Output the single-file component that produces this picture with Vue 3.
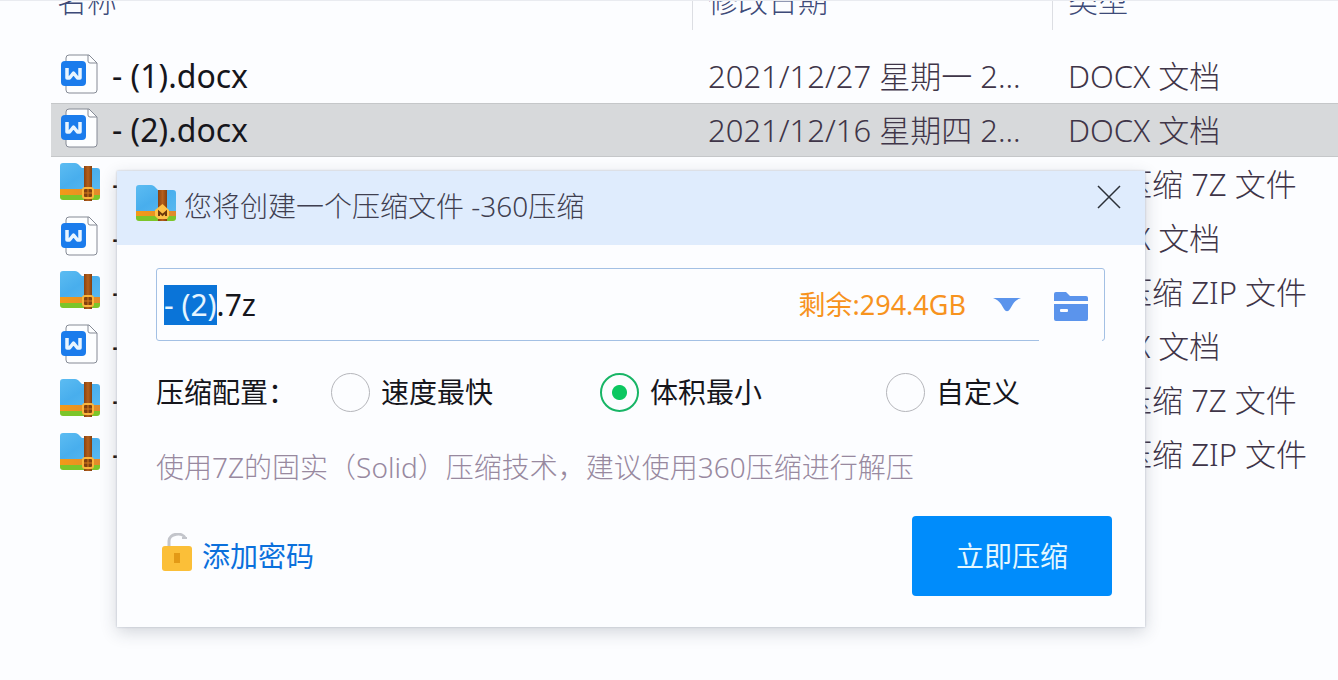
<script setup>
import { onMounted, ref } from 'vue'

const files = [
  { kind: 'word', name: '- (1).docx', date: '2021/12/27 星期一 2...', type: 'DOCX 文档' },
  { kind: 'word', name: '- (2).docx', date: '2021/12/16 星期四 2...', type: 'DOCX 文档', selected: true },
  { kind: 'archive', name: '-', date: '', type: '360压缩 7Z 文件' },
  { kind: 'word', name: '-', date: '', type: 'DOCX 文档' },
  { kind: 'archive', name: '-', date: '', type: '360压缩 ZIP 文件' },
  { kind: 'word', name: '-', date: '', type: 'DOCX 文档' },
  { kind: 'archive', name: '-', date: '', type: '360压缩 7Z 文件' },
  { kind: 'archive', name: '-', date: '', type: '360压缩 ZIP 文件' }
]

const modes = [
  { value: 'fast', label: '速度最快' },
  { value: 'small', label: '体积最小' },
  { value: 'custom', label: '自定义' }
]

const mode = ref('small')
const archiveName = ref('- (2).7z')
const nameInput = ref(null)

onMounted(() => {
  const stem = archiveName.value.lastIndexOf('.')
  nameInput.value.focus()
  nameInput.value.setSelectionRange(0, stem)
})
</script>

<template>
  <main class="desktop">
    <svg class="defs" aria-hidden="true">
      <defs>
        <linearGradient id="sky" x1="0" y1="0" x2="1" y2="1">
          <stop offset="0" stop-color="#5cbcf2" />
          <stop offset="0.5" stop-color="#48aeed" />
          <stop offset="1" stop-color="#58b8ef" />
        </linearGradient>
        <linearGradient id="strap" x1="0" y1="0" x2="1" y2="0">
          <stop offset="0" stop-color="#8a4210" />
          <stop offset="0.5" stop-color="#b5601c" />
          <stop offset="1" stop-color="#85400f" />
        </linearGradient>
        <linearGradient id="band" x1="0" y1="0" x2="1" y2="0">
          <stop offset="0" stop-color="#f39a18" />
          <stop offset="1" stop-color="#e08a2c" />
        </linearGradient>
        <symbol id="icon-word" viewBox="0 0 40 40">
          <path d="M9 1h20l8 8v27a3 3 0 0 1-3 3H9a3 3 0 0 1-3-3V4a3 3 0 0 1 3-3z" fill="#fdfeff" stroke="#858a95" />
          <path d="M28 1v6a2 2 0 0 0 2 2h7" fill="none" stroke="#858a95" />
          <rect x="1" y="7" width="25" height="25" rx="4" fill="#1b7cec" />
          <path d="M7 14v10h2.500l4-5 4 5H20V14" fill="none" stroke="#e9f5ff" stroke-width="3.500" stroke-linejoin="round" />
        </symbol>
        <symbol id="icon-archive" viewBox="0 0 40 40">
          <path d="M0 31h40v4a3 3 0 0 1-3 3H3a3 3 0 0 1-3-3z" fill="#7cc52a" />
          <path d="M0 27h40v6H0z" fill="url(#band)" />
          <path d="M0 4a3 3 0 0 1 3-3h12c2 0 3 1 4 2l3 3h15a3 3 0 0 1 3 3v18H0z" fill="url(#sky)" />
          <rect x="24" y="4" width="8" height="35" fill="url(#strap)" />
          <rect x="23" y="26" width="10" height="10" rx="2" fill="#81400f" stroke="#fbb53c" stroke-width="2" />
          <path d="M28 27v8M24 31h8" stroke="#d67b1d" stroke-width="1" />
        </symbol>
        <symbol id="icon-app" viewBox="0 0 40 40">
          <path d="M0 31h40v3a3 3 0 0 1-3 3H3a3 3 0 0 1-3-3z" fill="#7cc52a" />
          <path d="M0 27h40v5H0z" fill="url(#band)" />
          <path d="M0 4a3 3 0 0 1 3-3h12c2 0 3 1 4 2l3 3h15a3 3 0 0 1 3 3v18H0z" fill="url(#sky)" />
          <rect x="22" y="6" width="9" height="31" fill="url(#strap)" />
          <path d="M26.500 20l6.500 6v6l-2 3h-9l-3-3v-6z" fill="#ffc247" />
          <path d="M23 32v-4l3.500 3 3.500-3v4" fill="none" stroke="#6e3a0c" stroke-width="2" />
        </symbol>
      </defs>
    </svg>

    <table class="files">
      <colgroup>
        <col class="col-name" />
        <col class="col-date" />
        <col />
      </colgroup>
      <thead>
        <tr>
          <th><span class="head head-name">名称</span></th>
          <th><span class="head">修改日期</span></th>
          <th><span class="head head-last">类型</span></th>
        </tr>
      </thead>
      <tbody>
        <tr v-for="(file, i) in files" :key="i" :class="{ selected: file.selected }">
          <td>
            <span class="file-name">
              <svg class="file-icon" aria-hidden="true"><use :href="'#icon-' + file.kind" /></svg>
              {{ file.name }}
            </span>
          </td>
          <td class="meta">{{ file.date }}</td>
          <td class="meta">{{ file.type }}</td>
        </tr>
      </tbody>
    </table>

    <form class="dialog" role="dialog" aria-labelledby="dialog-title" @submit.prevent>
      <header class="title-bar">
        <svg class="app-icon" aria-hidden="true"><use href="#icon-app" /></svg>
        <h1 id="dialog-title" class="title">您将创建一个压缩文件 -360压缩</h1>
        <button class="close" type="button" aria-label="关闭">
          <svg width="26" height="26" viewBox="0 0 26 26" aria-hidden="true">
            <path d="M2 2l22 22M24 2L2 24" stroke="#2b3038" stroke-width="1.500" />
          </svg>
        </button>
      </header>

      <div class="body">
        <div class="field">
          <input ref="nameInput" v-model="archiveName" class="name-input" type="text" aria-label="压缩文件名" spellcheck="false" />
          <span class="space-left">剩余:294.4GB</span>
          <button class="drop" type="button" aria-label="选择位置">
            <svg width="28" height="14" viewBox="0 0 28 14" aria-hidden="true">
              <path d="M0 0h28c-3 1-6 3-8 6l-3 5c-2 3-4 3-6 0L8 6C6 3 3 1 0 0z" fill="#5b94ec" />
            </svg>
          </button>
          <button class="browse" type="button" aria-label="浏览文件夹">
            <svg width="34" height="30" viewBox="0 0 34 30" aria-hidden="true">
              <path d="M0 9V2a2 2 0 0 1 2-2h10l4 4h16a2 2 0 0 1 2 2v3z" fill="#5b94ec" />
              <path fill-rule="evenodd" d="M0 12h34v15a2 2 0 0 1-2 2H2a2 2 0 0 1-2-2zM7 17a1 1 0 0 0-1 1v1a1 1 0 0 0 1 1h6a1 1 0 0 0 1-1v-1a1 1 0 0 0-1-1z" fill="#5b94ec" />
            </svg>
          </button>
        </div>

        <div class="modes" role="radiogroup" aria-labelledby="modes-label">
          <span id="modes-label">压缩配置：</span>
          <label v-for="item in modes" :key="item.value" class="mode">
            <input v-model="mode" class="radio" type="radio" name="mode" :value="item.value" />
            {{ item.label }}
          </label>
        </div>

        <p class="hint">使用7Z的固实（Solid）压缩技术，建议使用360压缩进行解压</p>

        <footer class="actions">
          <a class="password" href="#">
            <svg width="30" height="38" viewBox="0 0 30 38" aria-hidden="true">
              <path d="M7 13V8c0-8 14-9 16-3" fill="none" stroke="#c3c5cb" stroke-width="3" />
              <path d="M20 5h5" stroke="#c3c5cb" stroke-width="2" />
              <rect y="13" width="30" height="25" rx="3" fill="#fbbf38" />
              <rect x="12" y="20" width="6" height="10" fill="#e39a16" />
            </svg>
            添加密码
          </a>
          <button class="submit" type="submit">立即压缩</button>
        </footer>
      </div>
    </form>
  </main>
</template>

<style>
body {
  background: #fcfdff;
}
</style>

<style scoped>
.desktop {
  position: relative;
  min-height: 100vh;
  overflow: hidden;
  box-sizing: border-box;
  border-top: 1px solid #e9ebf0;
  padding-left: 51px;
  font-family: "Noto Sans", "Open Sans", "Noto Sans CJK SC", sans-serif;
  color: #16161c;
}

.defs {
  position: absolute;
  width: 0;
  height: 0;
}

.files {
  width: 100%;
  margin-top: -30px;
  table-layout: fixed;
  border-collapse: collapse;
  font-size: 31px;
  line-height: 40px;
}

.col-name {
  width: 642px;
}

.col-date {
  width: 360px;
}

th {
  height: 78px;
  padding: 0;
  text-align: left;
  vertical-align: top;
  font-size: 30px;
  font-weight: 300;
  color: #3d4a78;
}

.head {
  display: block;
  padding: 10px 0 9px 15px;
  border-right: 1px solid #dcdee3;
}

.head-name {
  padding-left: 6px;
}

.head-last {
  border-right: 0;
}

td {
  height: 54px;
  padding: 0;
  white-space: nowrap;
}

.selected td {
  background: #d7d9db;
  box-shadow: inset 0 1px #c5c7c9, inset 0 -1px #c5c7c9;
}

.file-name {
  display: flex;
  align-items: center;
  gap: 12px;
  padding-left: 9px;
  font-size: 32px;
}

.file-icon {
  width: 40px;
  height: 40px;
  margin-bottom: 4px;
}

.meta {
  padding-left: 15px;
  font-weight: 300;
  color: #3f3548;
}

.dialog {
  position: absolute;
  top: 170px;
  left: 117px;
  right: 193px;
  background: #fcfdff;
  box-shadow: 0 0 2px #b4bcc8, 0 5px 16px rgba(40, 50, 70, 0.2);
  font-size: 28px;
  line-height: 40px;
}

.title-bar {
  display: flex;
  align-items: center;
  height: 74px;
  padding: 0 23px 0 19px;
  background: #dfecfd;
}

.app-icon {
  width: 40px;
  height: 40px;
  margin-bottom: 8px;
}

.title {
  flex: 1;
  margin: 0 0 0 8px;
  padding-bottom: 4px;
  font-size: 28px;
  font-weight: 300;
  line-height: 40px;
  color: #3f3f50;
}

button {
  border: 0;
  padding: 0;
  background: none;
  font: inherit;
}

.close {
  display: flex;
  margin-bottom: 22px;
}

.body {
  padding: 23px 33px 31px 39px;
}

.field {
  display: flex;
  align-items: center;
  height: 71px;
  margin-right: 7px;
  border: 1px solid #a3c0e4;
  border-radius: 3px;
  padding: 0 2px 0 7px;
}

.name-input {
  flex: 1;
  min-width: 0;
  height: 40px;
  border: 0;
  padding: 0;
  outline: none;
  background: none;
  font: inherit;
  font-size: 30px;
  line-height: 40px;
  color: #16161c;
}

.name-input::selection {
  background: #0a74d8;
  color: #e6f5ff;
}

.space-left {
  font-size: 27px;
  color: #f7931e;
}

.drop {
  display: flex;
  margin: 0 18px 0 27px;
}

.browse {
  display: flex;
  align-items: center;
  align-self: stretch;
  justify-content: center;
  width: 63px;
  margin-bottom: -1px;
  padding-top: 4px;
  background: #fcfdff;
}

.modes {
  display: grid;
  grid-template-columns: 175px 269px 286px 1fr;
  align-items: center;
  margin-top: 31px;
}

.mode {
  display: flex;
  align-items: center;
  gap: 11px;
}

.radio {
  appearance: none;
  width: 39px;
  height: 39px;
  margin: 0;
  border: 1px solid #b5b6bb;
  border-radius: 50%;
}

.radio:checked {
  border: 2px solid #18b566;
  background: radial-gradient(circle, #0cc760 7px, transparent 8px);
}

.hint {
  margin: 35px 0 0;
  font-weight: 300;
  color: #98899f;
}

.actions {
  display: flex;
  align-items: center;
  justify-content: space-between;
  margin-top: 29px;
}

.password {
  display: flex;
  align-items: center;
  gap: 10px;
  padding-left: 6px;
  color: #0b70dc;
  text-decoration: none;
}

.password svg {
  margin-bottom: 8px;
}

.submit {
  width: 200px;
  height: 80px;
  border-radius: 4px;
  background: #008cfb;
  color: #e4f7ff;
}
</style>
